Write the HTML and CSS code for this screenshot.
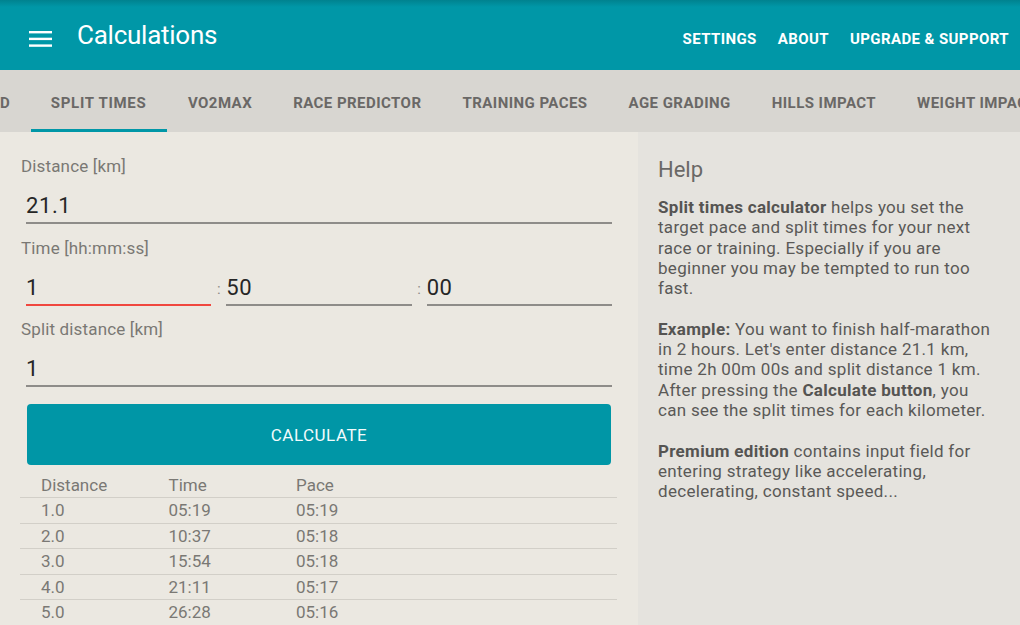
FILE: index.html
```html
<!DOCTYPE html>
<html lang="en">
<head>
<meta charset="utf-8">
<title>Calculations</title>
<link rel="stylesheet" href="styles.css">
</head>
<body>
<div class="app">
  <header class="appbar">
    <svg class="menu" width="23" height="16" viewBox="0 0 23 16" aria-hidden="true">
      <rect x="0" y="0" width="23" height="2.4" fill="#fff"/>
      <rect x="0" y="6.7" width="23" height="2.4" fill="#fff"/>
      <rect x="0" y="13.4" width="23" height="2.4" fill="#fff"/>
    </svg>
    <h1 class="title">Calculations</h1>
    <nav class="actions">
      <span class="action">SETTINGS</span>
      <span class="action">ABOUT</span>
      <span class="action">UPGRADE &amp; SUPPORT</span>
    </nav>
  </header>

  <div class="tabs">
    <div class="tab tab-first">SPEED</div>
    <div class="tab active">SPLIT TIMES</div>
    <div class="tab">VO2MAX</div>
    <div class="tab">RACE PREDICTOR</div>
    <div class="tab">TRAINING PACES</div>
    <div class="tab">AGE GRADING</div>
    <div class="tab">HILLS IMPACT</div>
    <div class="tab">WEIGHT IMPACT</div>
  </div>

  <main class="content">
    <section class="form">
      <div class="group">
        <div class="label">Distance [km]</div>
        <div class="field">21.1</div>
      </div>
      <div class="group g2">
        <div class="label">Time [hh:mm:ss]</div>
        <div class="time-row">
          <div class="field focused">1</div>
          <span class="colon">:</span>
          <div class="field">50</div>
          <span class="colon">:</span>
          <div class="field">00</div>
        </div>
      </div>
      <div class="group g3">
        <div class="label">Split distance [km]</div>
        <div class="field">1</div>
      </div>
      <button class="calc">CALCULATE</button>
      <div class="table">
        <div class="row head"><span>Distance</span><span>Time</span><span>Pace</span></div>
        <div class="row"><span>1.0</span><span>05:19</span><span>05:19</span></div>
        <div class="row"><span>2.0</span><span>10:37</span><span>05:18</span></div>
        <div class="row"><span>3.0</span><span>15:54</span><span>05:18</span></div>
        <div class="row"><span>4.0</span><span>21:11</span><span>05:17</span></div>
        <div class="row"><span>5.0</span><span>26:28</span><span>05:16</span></div>
      </div>
    </section>

    <aside class="help">
      <h2 class="help-title">Help</h2>
      <p><b>Split times calculator</b> helps you set the<br>target pace and split times for your next<br>race or training. Especially if you are<br>beginner you may be tempted to run too<br>fast.</p>
      <p><b>Example:</b> You want to finish half-marathon<br>in 2 hours. Let's enter distance 21.1 km,<br>time 2h 00m 00s and split distance 1 km.<br>After pressing the <b>Calculate button</b>, you<br>can see the split times for each kilometer.</p>
      <p><b>Premium edition</b> contains input field for<br>entering strategy like accelerating,<br>decelerating, constant speed...</p>
    </aside>
  </main>
</div>
</body>
</html>
```

FILE: styles.css
```css
* { box-sizing: border-box; }
html, body {
  margin: 0;
  padding: 0;
}
body {
  width: 1020px;
  height: 625px;
  overflow: hidden;
  font-family: Roboto, "Liberation Sans", sans-serif;
  background: #ebe8e1;
}
.app {
  width: 1020px;
  height: 625px;
  display: flex;
  flex-direction: column;
  overflow: hidden;
}

/* App bar */
.appbar {
  height: 70px;
  flex: none;
  display: flex;
  align-items: center;
  padding: 8px 11px 0 29px;
  background: linear-gradient(#00828f 0, #0097a7 7px, #0097a7 100%);
  color: #fff;
}
.menu { flex: none; }
.title {
  margin: 0 0 9px 25px;
  font-size: 26px;
  font-weight: 400;
  letter-spacing: -0.25px;
}
.actions {
  margin-left: auto;
  display: flex;
  gap: 21px;
}
.action {
  font-size: 15px;
  font-weight: 700;
  letter-spacing: 0.4px;
}

/* Tabs */
.tabs {
  height: 62px;
  flex: none;
  display: flex;
  background: #d8d6d1;
  overflow: hidden;
  white-space: nowrap;
}
.tab {
  flex: none;
  display: flex;
  align-items: center;
  padding: 6px 20.5px 0 20.5px;
  border-bottom: 3px solid transparent;
  font-size: 15px;
  font-weight: 700;
  color: #6a6866;
  letter-spacing: 0.45px;
}
.tab-first { margin-left: -58px; }
.tab.active {
  border-bottom-color: #0097a7;
  padding-left: 20px;
  padding-right: 21px;
  letter-spacing: 0.7px;
}

/* Content */
.content {
  flex: 1;
  display: flex;
  min-height: 0;
}
.form {
  width: 638px;
  flex: none;
  padding: 24px 21px 0 20px;
  background: #ebe8e1;
}
.group + .group { margin-top: 13.5px; }
.label {
  padding-left: 1px;
  font-size: 17px;
  line-height: 20px;
  letter-spacing: 0.15px;
  color: #7a7874;
}
.field {
  height: 48px;
  margin: 0 5px 0 6px;
  padding: 16px 0 2px 0;
  border-bottom: 2px solid #8e8c89;
  font-size: 22px;
  line-height: 28px;
  letter-spacing: 0.6px;
  color: #262626;
}
.time-row {
  display: flex;
  align-items: flex-start;
  margin: 0 5px 0 6px;
}
.time-row .field {
  flex: 1;
  margin: 0;
}
.time-row .field.focused { border-bottom-color: #f0473f; }
.colon {
  width: 15px;
  flex: none;
  text-align: center;
  padding-top: 22px;
  font-size: 15px;
  color: #8d8b87;
}

.calc {
  display: block;
  width: 584px;
  height: 61px;
  margin: 17px 0 0 7px;
  border: none;
  border-radius: 4px;
  background: #0096a6;
  color: #f2fbfc;
  font-family: Roboto, "Liberation Sans", sans-serif;
  font-size: 17px;
  letter-spacing: 0.5px;
}

.table { margin-top: 8px; }
.row {
  height: 25.5px;
  display: flex;
  align-items: center;
  padding-left: 21px;
  border-bottom: 1px solid #d2cfc8;
  font-size: 17px;
  color: #7a7874;
}
.row.head { height: 25px; }
.row span { width: 127.5px; }

/* Help */
.help {
  flex: 1;
  padding: 25px 10px 0 20px;
  background: #e5e3de;
  color: #5a5957;
  white-space: nowrap;
}
.help-title {
  margin: 0;
  font-size: 22px;
  font-weight: 400;
  line-height: 26px;
  color: #6a6866;
}
.help p {
  margin: 14px 0 0 0;
  font-size: 17px;
  line-height: 20.3px;
  letter-spacing: 0.3px;
}
.help p + p { margin-top: 20.3px; }
.help b { font-weight: 700; color: #555452; }
```
